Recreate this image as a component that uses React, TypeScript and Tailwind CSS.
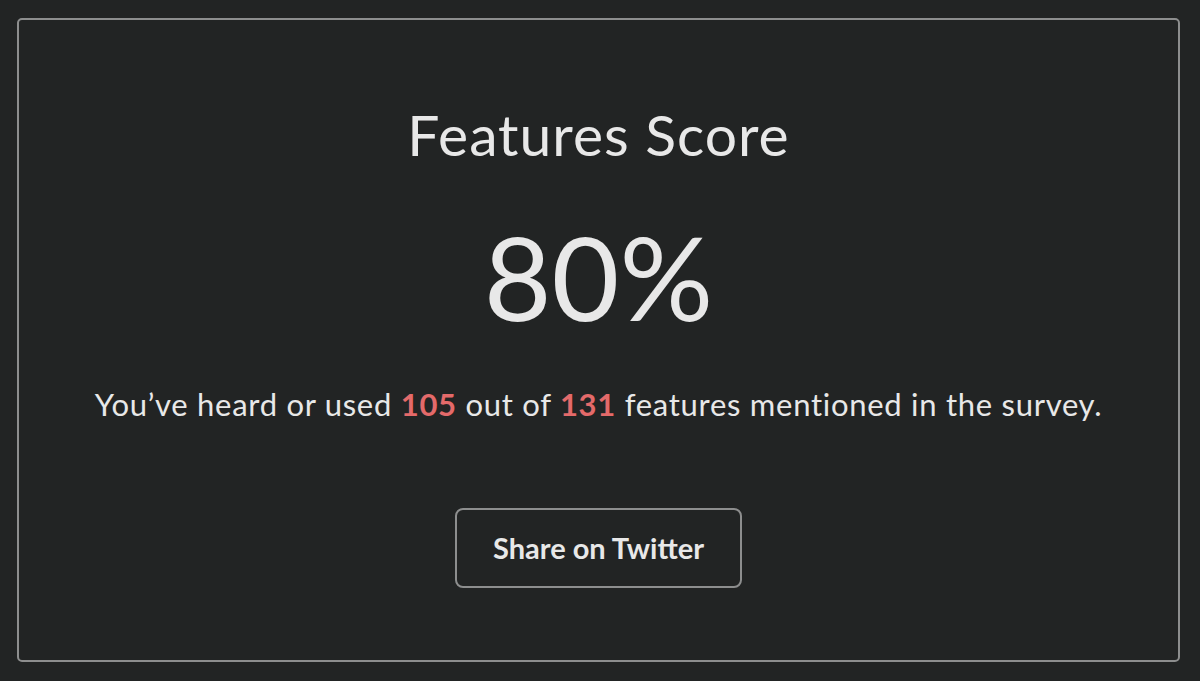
export default function App() {
  return (
    <div
      className="w-[1200px] h-[681px] bg-[#222424] pl-[17px] pr-[20px] pt-[18px] pb-[19px] flex"
      style={{ fontFamily: "Lato, 'Noto Sans', sans-serif" }}
    >
      <div className="flex-1 border-2 border-[#8d8e8e] rounded-[5px] flex flex-col items-center text-[#e8e8e8]">
        <h1 className="mt-[82px] text-[57px] leading-[64px] font-normal tracking-[1px]">Features Score</h1>
        <div className="mt-[50px] text-[117px] leading-[120px] font-normal">80%</div>
        <p className="mt-[50px] text-[31px] leading-[36px] tracking-[0.72px]">
          You’ve heard or used <span className="font-bold text-[#e46a6a]">105</span> out of{" "}
          <span className="font-bold text-[#e46a6a]">131</span> features mentioned in the survey.
        </p>
        <button className="mt-[86px] w-[287px] h-[80px] border-2 border-[#8d8e8e] rounded-[8px] text-[29px] font-bold text-[#e8e8e8] bg-transparent">
          Share on Twitter
        </button>
      </div>
    </div>
  );
}
